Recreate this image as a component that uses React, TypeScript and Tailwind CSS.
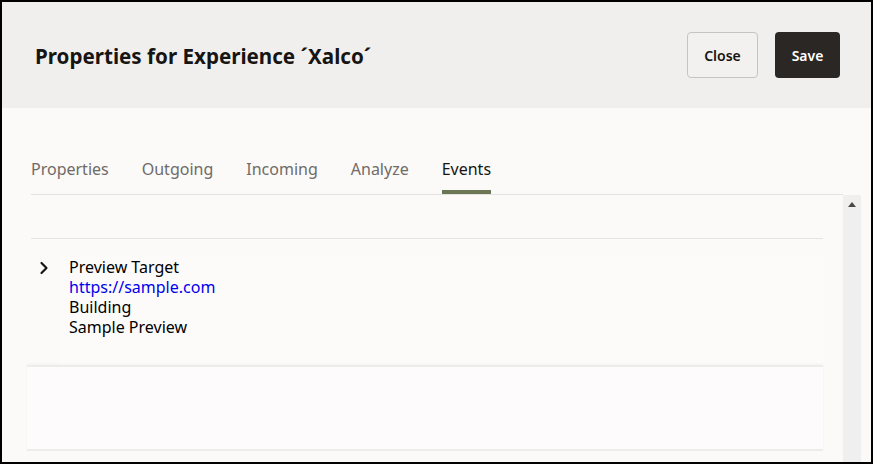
import { ChevronRight } from 'lucide-react';

const tabs = ['Properties', 'Outgoing', 'Incoming', 'Analyze', 'Events'];

const App = () => {
  return (
    <div className="h-[464px] w-[873px] overflow-hidden border-2 border-black bg-[#fbfaf9] font-['Noto_Sans',sans-serif]">
      <header className="flex h-[106px] items-center justify-between bg-[#f1efed] pl-[33px] pr-[31px]">
        <h1 className="pt-[2px] text-[20.6px] font-bold text-[#161513]">Properties for Experience ´Xalco´</h1>
        <div className="flex items-center gap-[17px]">
          <button className="h-[46px] w-[71px] rounded-[4px] border border-[#c7c3bf] bg-[#f3f1ef] text-[14px] font-semibold text-[#161513]">
            Close
          </button>
          <button className="h-[46px] w-[65px] rounded-[4px] bg-[#2b2725] text-[14px] font-semibold text-white">
            Save
          </button>
        </div>
      </header>

      <div className="flex h-[354px] flex-col">
        <nav className="ml-[29px] flex h-[87px] w-[812px] shrink-0 items-end gap-[33px] border-b border-[#e4e2e0]">
          {tabs.map((tab) => (
            <div
              key={tab}
              className={
                tab === 'Events'
                  ? 'flex h-[44px] items-center border-b-4 border-[#6b7656] pb-[2px] text-[16px] text-[#161513]'
                  : 'flex h-[44px] items-center border-b-4 border-transparent pb-[2px] text-[16px] text-[#6f6b67]'
              }
            >
              {tab}
            </div>
          ))}
        </nav>

        <div className="flex flex-1">
          <div className="flex flex-1 flex-col">
            <div className="ml-[29px] mr-[20px] mt-[43px] border-t border-[#e6e4e2]">
              <div className="flex h-[126px] pt-[18px]">
                <div className="w-[29px] pl-[3px] pt-[1px]">
                  <ChevronRight size={20} strokeWidth={2.6} className="text-[#161513]" />
                </div>
                <div className="flex-1 bg-[#fdfbfa] pl-[9px] text-[16px] leading-[20px] text-black">
                  <div>Preview Target</div>
                  <div className="text-[#0000ee]">https://sample.com</div>
                  <div>Building</div>
                  <div>Sample Preview</div>
                </div>
              </div>
            </div>

            <div className="ml-[25px] mr-[20px] h-[86px] border-y-[2px] border-[#eeecea] bg-[#fdfbfb] shadow-[0_-1px_2px_rgba(0,0,0,0.04)]" />
          </div>

          <div className="flex w-[18px] justify-center bg-[#f0efef] pt-[7px]">
            <div className="h-0 w-0 border-x-[4px] border-b-[5px] border-x-transparent border-b-[#4a4745]" />
          </div>
          <div className="w-[10px]" />
        </div>
      </div>
    </div>
  );
};

export default App;
